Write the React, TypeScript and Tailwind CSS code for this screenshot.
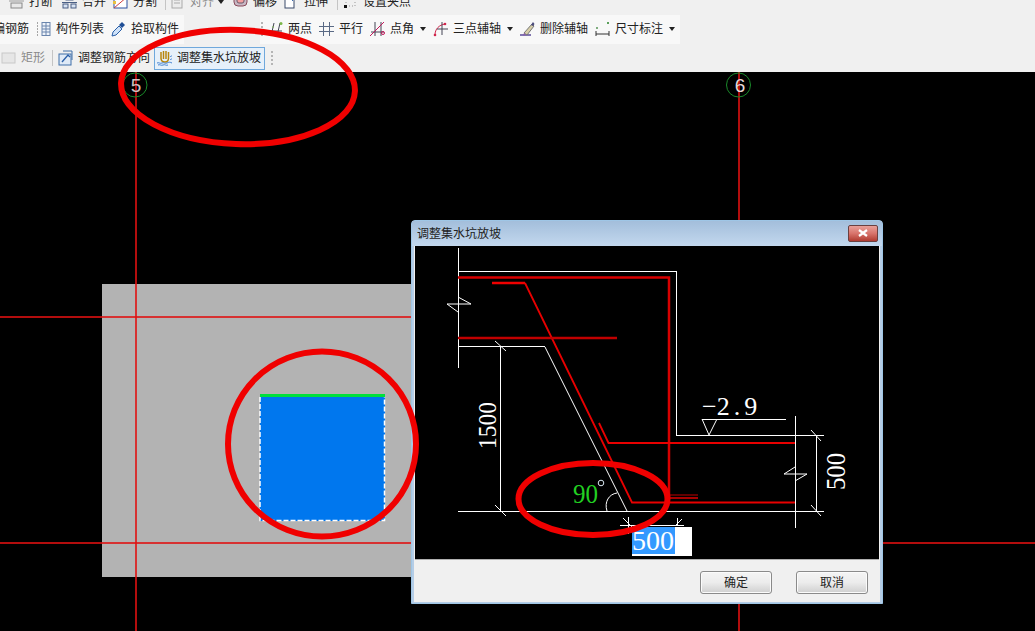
import React from "react";

const font = { fontFamily: '"Liberation Sans","Noto Sans CJK SC",sans-serif' };
const serif = { fontFamily: '"Liberation Serif",serif' };

type IP = { children: React.ReactNode };
const Ico = ({ children }: IP) => (
  <svg width="15" height="16" viewBox="0 0 15 16" fill="none" className="shrink-0">
    {children}
  </svg>
);

const Caret = ({ className = "" }: { className?: string }) => (
  <span className={`w-0 h-0 border-l-[3px] border-r-[3px] border-t-[4px] border-l-transparent border-r-transparent border-t-[#222] ${className}`} />
);

const Tool = ({ icon, label, className = "", gray = false }: { icon: React.ReactNode; label: string; className?: string; gray?: boolean }) => (
  <div className={`flex items-center gap-[5px] shrink-0 ${className}`}>
    {icon}
    <span className={`text-[12px] leading-[16px] whitespace-nowrap ${gray ? "text-[#8a8a8a]" : "text-[#222]"}`}>{label}</span>
  </div>
);

const Dots = ({ className = "" }: { className?: string }) => (
  <div className={`flex flex-col gap-[2px] w-[2px] shrink-0 ${className}`}>
    {[0, 1, 2, 3].map((i) => (
      <span key={i} className="w-[2px] h-[2px] bg-[#b5b5b5]" />
    ))}
  </div>
);

const Sep = ({ className = "" }: { className?: string }) => <span className={`w-px h-[16px] bg-[#c4c4c4] shrink-0 ${className}`} />;

const breakIcon = (
  <Ico>
    <path d="M0 3h15M0 7h15" stroke="#9a9a9a" />
    <rect x="2" y="9" width="11" height="5" fill="#e8e8e8" stroke="#888" />
  </Ico>
);
const mergeIcon = (
  <Ico>
    <rect x="4" y="3" width="7" height="3" fill="#fff" stroke="#4a5f85" />
    <path d="M0 8.5h15" stroke="#4a5f85" />
    <rect x="1" y="10" width="5" height="4" fill="#d7e3f3" stroke="#4a5f85" />
    <rect x="9" y="10" width="5" height="4" fill="#d7e3f3" stroke="#4a5f85" />
  </Ico>
);
const splitIcon = (
  <Ico>
    <rect x="1" y="3" width="13" height="11" fill="#fff" stroke="#2a4fa0" />
    <path d="M1 14L14 3" stroke="#d04040" />
    <rect x="0" y="7" width="3" height="3" fill="#e8c040" />
    <rect x="12" y="1" width="3" height="3" fill="#e8c040" />
  </Ico>
);
const alignIcon = (
  <Ico>
    <rect x="2" y="2" width="10" height="12" fill="#ececec" stroke="#aaa" />
    <path d="M4 6h6M4 9h6" stroke="#aaa" />
  </Ico>
);
const offsetIcon = (
  <Ico>
    <rect x="1" y="1" width="13" height="11" rx="4" fill="#c9b8c4" stroke="#8a4a5a" />
    <rect x="4" y="4" width="7" height="5" rx="2" fill="#f5a0a0" stroke="#6a5a6a" />
  </Ico>
);
const stretchIcon = (
  <Ico>
    <rect x="1" y="5" width="9" height="9" fill="#fff" stroke="#3a4a6a" />
    <path d="M8 7l6-6M10 1h4v4" stroke="#3a6ab0" />
  </Ico>
);
const gripIcon = (
  <Ico>
    <path d="M3 5h9M3 12h9M3 5v7M12 5v7" stroke="#999" strokeDasharray="1 2" />
    <rect x="1" y="3" width="3" height="3" fill="#111" />
    <rect x="11" y="3" width="3" height="3" fill="#111" />
    <rect x="1" y="11" width="3" height="3" fill="#111" />
  </Ico>
);
const listIcon = (
  <Ico>
    <path d="M1 2h2M1 5h2M1 8h2M1 11h2M1 14h2" stroke="#555" strokeDasharray="1 1" />
    <rect x="6" y="1.5" width="8" height="13" fill="#eef3fa" stroke="#6a85ad" />
    <path d="M6 5h8M6 8h8M6 11h8M10 1.5v13" stroke="#6a85ad" />
  </Ico>
);
const pickIcon = (
  <Ico>
    <path d="M1 15l1-4 6-6 3 3-6 6z" fill="#cfe2f8" stroke="#2a5fa8" />
    <path d="M8 4l3-3 3 3-3 3z" fill="#1f4f96" />
  </Ico>
);
const twoIcon = (
  <Ico>
    <path d="M3 15L6 2M9 15l3-13M1 10h13" stroke="#445" />
    <circle cx="13" cy="2.5" r="1.5" fill="#7ab648" />
    <circle cx="5" cy="6" r="0.8" fill="#7ab648" />
  </Ico>
);
const parIcon = (
  <Ico>
    <path d="M4.5 1v14M10.5 1v14M0 5.5h15M0 10.5h15" stroke="#5a6a85" />
  </Ico>
);
const angIcon = (
  <Ico>
    <path d="M5 1v14M11 1v14M1 11h13" stroke="#445" />
    <path d="M0 15L14 1" stroke="#c2185b" />
    <circle cx="13" cy="12" r="1.5" stroke="#c2185b" />
  </Ico>
);
const threeIcon = (
  <Ico>
    <path d="M2 14C2 8 6 4 12 3" stroke="#d0264c" />
    <path d="M9 1v13M4 8h11" stroke="#445" />
    <circle cx="2" cy="14" r="1.3" fill="#d0264c" />
    <circle cx="12" cy="3" r="1.3" fill="#d0264c" />
  </Ico>
);
const delIcon = (
  <Ico>
    <path d="M0 14h11" stroke="#5b4b9a" strokeWidth="1.5" />
    <path d="M4 12l8-9 2 2-7 9z" fill="#d8cfa8" stroke="#777" />
    <path d="M11 4l2-3 1.5 2-1.5 2z" fill="#4a4a7a" />
    <path d="M4 12l2 2-3 .5z" fill="#8a5ca8" />
  </Ico>
);
const dimIcon = (
  <Ico>
    <path d="M1 10v5M14 10v5M1 13h13" stroke="#333" />
    <rect x="1" y="6" width="2" height="2" fill="#7fae7f" />
    <rect x="12" y="1" width="2" height="2" fill="#5aa05a" />
  </Ico>
);
const rectIcon = (
  <Ico>
    <rect x="1" y="3" width="13" height="10" fill="#e6e6e6" stroke="#c8c8c8" />
  </Ico>
);
const rebarIcon = (
  <Ico>
    <rect x="1" y="4" width="12" height="11" fill="#dfeaf7" stroke="#3f6ea8" />
    <path d="M5 1h9v9" stroke="#3f6ea8" />
    <path d="M4 12l6-7 2 2" stroke="#2a5fa8" strokeWidth="1.3" />
  </Ico>
);
const pitIcon = (
  <Ico>
    <path d="M4 2v7M6.5 1v8M9 1v8M11.500 2v7M4 8c0 3 2 4 4 4s3.500-1 3.500-4" stroke="#b8860b" strokeWidth="1.5" />
    <path d="M0 13c2-1 3 1 5 0s3 1 5 0 3-1 5 0M1 15c2-1 3 1 5 0s3 1 5 0" stroke="#3f7fd0" />
    <path d="M13 7c1-1 1-1 2-1M13 10c1-1 1-1 2-1" stroke="#3f7fd0" />
  </Ico>
);

const Drawing = () => (
  <svg width="464" height="313" viewBox="415 246 464 313" className="block">
    <g stroke="#ffffff" strokeWidth="1" fill="none" shapeRendering="crispEdges">
      <path d="M458.500 248V368" />
      <path d="M458 271.500H676.500V435.500H795" />
      <path d="M458 346.500H545" />
      <path d="M458 511.500H795" />
      <path d="M795.500 416V528" />
      <path d="M500.500 346V511" />
      <path d="M816.500 435V511" />
      <path d="M795 435.500H824M795 511.500H824" />
      <path d="M702 419.500H786" />
      <path d="M628.500 517V534M677.500 518V525M620 525.500H684" />
    </g>
    <g stroke="#ffffff" strokeWidth="1" fill="none">
      <path d="M545 347L627 511" />
      <path d="M447 304H471L458 297M447 304L458 312" />
      <path d="M784 474H807L795 481M784 474L795 467" />
      <path d="M495 341L506 351M495 505L506 516M811 430L821 441M811 505L821 516" />
      <path d="M702 419L709 435L717 419" />
      <path d="M607 511C604 502 609 494 617 493" />
      <path d="M623 518L634 529M676 525L682 519" />
    </g>
    <g fill="none">
      <path d="M458 277.500H669V498" strokeWidth="2.500" stroke="#d80000" />
      <path d="M492 283H525" strokeWidth="2.500" stroke="#f00000" />
      <path d="M525 283L632 502.500H795" strokeWidth="1.800" stroke="#e80000" />
      <path d="M458 338H617" strokeWidth="2.500" stroke="#c00000" />
      <path d="M599 423L608.500 443H795" strokeWidth="1.800" stroke="#e80000" />
      <path d="M669 498H698" strokeWidth="2" stroke="#a80000" />
      <path d="M670 495H698" strokeWidth="1" stroke="#c00000" />
    </g>
    <text x="702" y="415" fill="#fff" fontSize="26" style={serif}>
      −<tspan letterSpacing="4">2.9</tspan>
    </text>
    <text transform="translate(496 449) rotate(-90)" fill="#fff" fontSize="26" textLength="47" lengthAdjust="spacingAndGlyphs" style={serif}>
      1500
    </text>
    <text transform="translate(845 490) rotate(-90)" fill="#fff" fontSize="27" textLength="37" lengthAdjust="spacingAndGlyphs" style={serif}>
      500
    </text>
    <text x="573" y="503" fill="#22d022" fontSize="28" textLength="25" lengthAdjust="spacingAndGlyphs" style={serif}>
      90
    </text>
    <circle cx="601" cy="483" r="2.800" stroke="#d8e8f0" fill="none" />
  </svg>
);

const DlgButton = ({ label, className = "" }: { label: string; className?: string }) => (
  <button className={`w-[72px] h-[23px] rounded-[3px] border border-[#8a8a8a] bg-gradient-to-b from-[#f4f4f4] via-[#ececec] to-[#cfcfcf] text-[12px] text-[#222] shadow-[inset_0_0_0_1px_#fbfbfb] ${className}`}>
    {label}
  </button>
);

const Dialog = () => (
  <div className="absolute left-[411px] top-[148px] w-[472px] h-[384px] flex flex-col rounded-t-[4px] border border-[#9fc6e6] bg-[#b5cde6]">
    <div className="h-[25px] flex items-center pl-[5px] pr-[4px] bg-gradient-to-b from-[#a3bedb] to-[#c3d8ee] shrink-0">
      <span className="text-[12px] text-[#222] leading-none mt-[1px]">调整集水坑放坡</span>
      <div className="ml-auto mb-[1px] w-[30px] h-[17px] rounded-[2px] border border-[#6a4040] bg-gradient-to-b from-[#e8a09a] via-[#d8736b] to-[#b03a30] flex items-center justify-center">
        <svg width="10" height="8" viewBox="0 0 10 8">
          <path d="M1 1l8 6M9 1l-8 6" stroke="#fff" strokeWidth="2.200" />
        </svg>
      </div>
    </div>
    <div className="flex-1 mx-[2px] mb-[1px] flex flex-col bg-[#f0f0f0] border-x border-[#f0f0f0]">
      <div className="relative h-[313px] shrink-0 bg-black">
        <Drawing />
        <div className="absolute left-[217px] top-[281px] w-[60px] h-[29px] bg-white">
          <span className="block w-[43px] h-[27px] bg-[#3399ff] text-white text-[28px] leading-[27px]" style={serif}>
            500
          </span>
        </div>
      </div>
      <div className="flex-1 flex justify-end items-start pt-[11px] pr-[11px] gap-[24px] border-t border-[#b0b0b0]">
        <DlgButton label="确定" />
        <DlgButton label="取消" />
      </div>
    </div>
  </div>
);

const Canvas = () => (
  <div className="relative flex-1 bg-black overflow-hidden">
    <svg width="1035" height="559" viewBox="0 72 1035 559" className="absolute left-0 top-0">
      <rect x="102" y="284" width="312" height="293" fill="#b3b3b3" />
      <g fill="#e01010">
        <rect x="135" y="72" width="2" height="559" opacity="0.8" />
        <rect x="738" y="72" width="2" height="559" opacity="0.8" />
        <rect x="0" y="316" width="411" height="2" opacity="0.8" />
        <rect x="0" y="542" width="411" height="2" opacity="0.8" />
        <rect x="883" y="542" width="152" height="2" opacity="0.8" />
      </g>
      <circle cx="135" cy="85" r="12" stroke="#1a8a2a" fill="none" />
      <circle cx="738.500" cy="85" r="12" stroke="#1a8a2a" fill="none" />
      <text x="136" y="92" textAnchor="middle" fill="#d0c0c0" fontSize="19" style={font}>
        5
      </text>
      <text x="740" y="92" textAnchor="middle" fill="#e6d8d8" fontSize="19" style={font}>
        6
      </text>
      <rect x="260" y="394" width="125" height="127" fill="#0077ee" />
      <rect x="260" y="394" width="125" height="3" fill="#00e03c" />
      <path d="M260 397V520.500H384.500V397" fill="none" stroke="#fff" strokeWidth="1.500" strokeDasharray="5 2" />
    </svg>
    <Dialog />
  </div>
);

export default function App() {
  return (
    <div className="relative w-[1035px] h-[631px] flex flex-col overflow-hidden bg-black" style={font}>
      <div className="h-[72px] shrink-0 flex flex-col bg-[#f0f0f0]">
        <div className="h-[15px] overflow-hidden shrink-0">
          <div className="flex items-center h-[16px] -mt-[6px] pl-[9px]">
            <Tool icon={breakIcon} label="打断" />
            <Tool icon={mergeIcon} label="合并" className="ml-[9px]" />
            <Tool icon={splitIcon} label="分割" className="ml-[7px]" />
            <Sep className="ml-[8px]" />
            <Tool icon={alignIcon} label="对齐" gray className="ml-[4px]" />
            <Caret className="ml-[4px]" />
            <Tool icon={offsetIcon} label="偏移" className="ml-[9px]" />
            <Tool icon={stretchIcon} label="拉伸" className="ml-[7px]" />
            <Sep className="ml-[9px]" />
            <Tool icon={gripIcon} label="设置夹点" className="ml-[5px]" />
          </div>
        </div>
        <div className="h-[29px] flex shrink-0">
          <div className="w-[184px] h-full pb-[2px] bg-[#f8f8f8] flex items-center overflow-hidden shrink-0">
            <span className="text-[12px] text-[#222] -ml-[7px] whitespace-nowrap">编钢筋</span>
            <Tool icon={listIcon} label="构件列表" className="ml-[7px]" />
            <Tool icon={pickIcon} label="拾取构件" className="ml-[7px]" />
          </div>
          <div className="ml-[76px] w-[420px] h-full pb-[2px] bg-[#f8f8f8] flex items-center shrink-0">
            <Dots className="ml-[1px]" />
            <Tool icon={twoIcon} label="两点" className="ml-[5px]" />
            <Tool icon={parIcon} label="平行" className="ml-[7px]" />
            <Tool icon={angIcon} label="点角" className="ml-[7px]" />
            <Caret className="ml-[6px]" />
            <Tool icon={threeIcon} label="三点辅轴" className="ml-[7px]" />
            <Caret className="ml-[6px]" />
            <Tool icon={delIcon} label="删除辅轴" className="ml-[7px]" />
            <Tool icon={dimIcon} label="尺寸标注" className="ml-[7px]" />
            <Caret className="ml-[6px]" />
          </div>
        </div>
        <div className="h-[28px] flex items-center pl-[1px] shrink-0">
          <Tool icon={rectIcon} label="矩形" gray />
          <Sep className="ml-[7px]" />
          <Tool icon={rebarIcon} label="调整钢筋方向" className="ml-[5px]" />
          <div className="ml-[4px] w-[111px] h-[23px] px-[2px] flex items-center border border-[#6fa8dc] bg-[#e6f0fa] shrink-0">
            <Tool icon={pitIcon} label="调整集水坑放坡" />
          </div>
          <Dots className="ml-[6px]" />
        </div>
      </div>
      <Canvas />
      <svg width="1035" height="631" viewBox="0 0 1035 631" className="absolute left-0 top-0 pointer-events-none" fill="none" stroke="#f00000" strokeWidth="6">
        <ellipse cx="238" cy="87" rx="117" ry="57" transform="rotate(2 238 87)" />
        <ellipse cx="322" cy="444" rx="94" ry="92.500" />
        <ellipse cx="593" cy="499" rx="74.500" ry="36" />
      </svg>
    </div>
  );
}
